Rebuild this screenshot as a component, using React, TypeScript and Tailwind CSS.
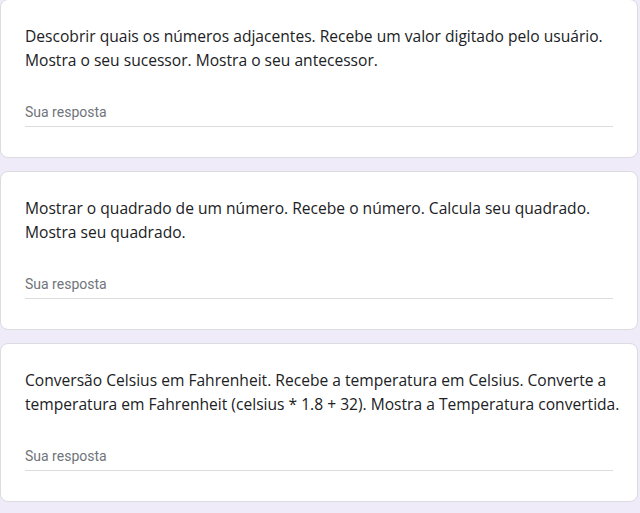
import React from "react";

const questions: string[][] = [
  [
    "Descobrir quais os números adjacentes. Recebe um valor digitado pelo usuário.",
    "Mostra o seu sucessor. Mostra o seu antecessor.",
  ],
  [
    "Mostrar o quadrado de um número. Recebe o número. Calcula seu quadrado.",
    "Mostra seu quadrado.",
  ],
  [
    "Conversão Celsius em Fahrenheit. Recebe a temperatura em Celsius. Converte a",
    "temperatura em Fahrenheit (celsius * 1.8 + 32). Mostra a Temperatura convertida.",
  ],
];

function Card({ lines }: { lines: string[] }) {
  return (
    <div className="w-[638px] h-[159px] bg-white border border-[#dadce0] rounded-[8px] px-[24px] pt-[24px] pb-[31px] flex flex-col">
      <div className="text-[15.6px] leading-[24px] text-[#202124] font-['Open_Sans',sans-serif]">
        {lines.map((l, i) => (
          <div key={i} className="whitespace-nowrap">
            {l}
          </div>
        ))}
      </div>
      <div className="mt-[30px] pb-[4px] border-b border-[#dadce0] text-[14px] leading-[20px] text-[#70757a] font-['Roboto',sans-serif]">
        Sua resposta
      </div>
    </div>
  );
}

export default function App() {
  return (
    <div className="w-[640px] h-[513px] bg-[#f0ebf8] overflow-hidden">
      <div className="mt-[-1px] flex flex-col gap-[13px]">
        {questions.map((q, i) => (
          <Card key={i} lines={q} />
        ))}
      </div>
    </div>
  );
}
